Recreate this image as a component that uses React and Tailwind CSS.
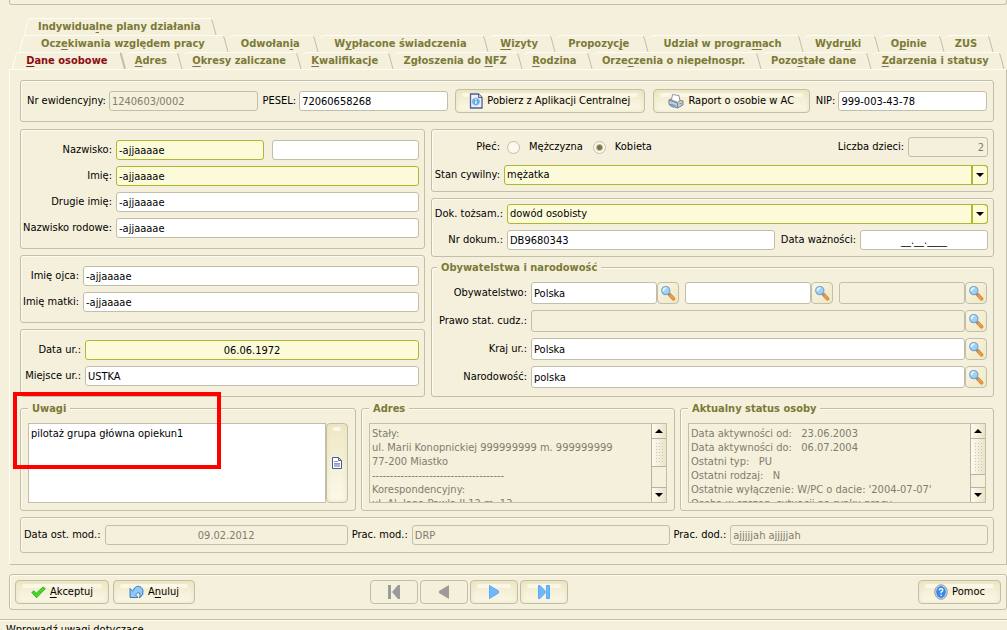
import { useState } from "react";

const tabRows = [
  ["Indywidua&lne plany działania"],
  [
    "Ocz&ekiwania względem pracy",
    "Odwołan&ia",
    "W&ypłacone świadczenia",
    "&Wizyty",
    "Propozyc&je",
    "Udział w progra&mach",
    "Wydr&uki",
    "O&pinie",
    "ZUS",
  ],
  [
    "&Dane osobowe",
    "&Adres",
    "&Okresy zaliczane",
    "&Kwalifikacje",
    "Zgłoszenia do &NFZ",
    "&Rodzina",
    "Orze&czenia o niepełnospr.",
    "Pozo&stałe dane",
    "&Zdarzenia i statusy",
  ],
];

const rowStyles = [
  "flex h-[17px] pl-[24px]",
  "flex h-[17px] pl-[19px] pr-[13px]",
  "flex h-[17px] pl-[12px] pr-[2px]",
];

const adresText = `Stały:
ul. Marii Konopnickiej 999999999 m. 999999999
77-200 Miastko
-------------------------------------
Korespondencyjny:
ul. Al. Jana Pawła II 12 m. 12`;

const statusText = `Data aktywności od:   23.06.2003
Data aktywności do:   06.07.2004
Ostatni typ:   PU
Ostatni rodzaj:   N
Ostatnie wyłączenie: W/PC o dacie: '2004-07-07'
Osoba w szczeg. sytuacji na rynku pracy:`;

// "&" stands before the access key letter
function Mnemonic({ text }) {
  const i = text.indexOf("&");
  if (i < 0) return text;
  return (
    <>
      {text.slice(0, i)}
      <u className="underline underline-offset-2">{text[i + 1]}</u>
      {text.slice(i + 2)}
    </>
  );
}

function Tab({ label, active, first, grow, onClick }) {
  return (
    <button
      type="button"
      role="tab"
      aria-selected={active}
      onClick={onClick}
      style={{ flexGrow: grow }}
      className="flex h-[17px] text-[11px] leading-4 font-bold whitespace-nowrap"
    >
      <svg width="6" height="17" viewBox="0 0 6 17" fill="none" stroke="#fffef6">
        {first ? <path d="M0.5 17L3.5 4Q4.5 0.5 6 0.5" /> : <path d="M1 3Q2 0.5 6 0.5" />}
      </svg>
      <span
        className={`grow border-t border-[#fffef6] ${first ? "pl-2" : "pl-[3px]"} ${
          active ? "pr-3 text-[#8b0d12]" : "pr-[10px] text-[#7b7a38]"
        }`}
      >
        <Mnemonic text={label} />
      </span>
      <svg width="6" height="17" viewBox="0 0 6 17" fill="none">
        <path d="M0 1.5Q1 1.5 1.5 4L5 17" stroke="#bfbda8" strokeWidth={active ? 2 : 1} />
      </svg>
    </button>
  );
}

function Group({ className = "", children }) {
  return (
    <div
      className={`rounded-[3px] border border-[#c1bea9] shadow-[inset_1px_1px_0_#fefcf0] ${className}`}
    >
      {children}
    </div>
  );
}

function TitledGroup({ title, className = "", children }) {
  return (
    <fieldset
      className={`min-w-0 rounded-[3px] border border-[#c1bea9] shadow-[inset_1px_1px_0_#fefcf0] ${className}`}
    >
      <legend className="h-[13px] bg-[#f5f0dc] px-1 text-[11px] leading-[13px] font-bold text-[#7b7a38]">
        {title}
      </legend>
      {children}
    </fieldset>
  );
}

const fieldLook = {
  normal: "border-[#c1bea9] bg-white text-black",
  required: "border-[#acb82f] bg-[#fcfbd9] text-black",
  disabled: "border-[#c1bea9] bg-[#f5f0dc] text-[#807c6c]",
};

function Field({ look = "normal", className = "h-5", ...props }) {
  return (
    <input
      type="text"
      readOnly={look === "disabled"}
      className={`min-w-0 flex-1 rounded-[3px] border px-[2px] text-[11px] outline-none ${fieldLook[look]} ${className}`}
      {...props}
    />
  );
}

function Label({ className = "", ...props }) {
  return <label className={`shrink-0 text-right whitespace-nowrap ${className}`} {...props} />;
}

function Row({ id, label, labelWidth, children }) {
  return (
    <div className="flex items-center gap-1">
      <Label htmlFor={id} className={labelWidth}>
        {label}
      </Label>
      {children}
    </div>
  );
}

function Button({ className = "", children, disabled, ...props }) {
  return (
    <button
      type="button"
      disabled={disabled}
      className={`relative isolate flex h-6 shrink-0 items-center justify-center gap-1 rounded-[4px] border border-[#c1bea9] whitespace-nowrap ${
        disabled
          ? ""
          : "bg-linear-to-b from-[#efe8c4] via-[#f5f0d8] to-[#fbf9e9] shadow-[inset_0_0_5px_#e8e1bb]"
      } ${className}`}
      {...props}
    >
      {!disabled && (
        <span className="absolute inset-x-[6px] top-[3px] -z-10 h-[4px] rounded-[2px] bg-[#faf7e8]" />
      )}
      {children}
    </button>
  );
}

function Combo({ id, options }) {
  return (
    <div className="relative min-w-0 flex-1">
      <select
        id={id}
        className="block h-5 w-full appearance-none rounded-[3px] border border-[#acb82f] bg-[#fcfbd9] pr-5 pl-[2px] text-[11px] outline-none"
      >
        {options.map((o) => (
          <option key={o}>{o}</option>
        ))}
      </select>
      <span className="pointer-events-none absolute top-0 right-0 flex h-5 w-[17px] items-center justify-center rounded-r-[4px] border border-l-2 border-[#acb82f] bg-[#fcfbd9]">
        <svg width="8" height="4" viewBox="0 0 8 4">
          <path d="M0 0H8L4 4Z" fill="#000" />
        </svg>
      </span>
    </div>
  );
}

function SearchButton({ label }) {
  return (
    <button
      type="button"
      aria-label={label}
      className="flex h-[22px] w-[22px] shrink-0 items-center justify-center rounded-[4px] border border-[#c1bea9] bg-linear-to-br from-[#f9f6e4] to-[#efe8c4]"
    >
      <svg width="16" height="16" viewBox="0 0 16 16">
        <path d="M9.5 9.5L13.5 13.8" stroke="#b98a63" strokeWidth="3.6" strokeLinecap="round" />
        <path d="M10.2 10.2L13.3 13.6" stroke="#ff9a2e" strokeWidth="2.2" strokeLinecap="round" />
        <path d="M8.8 8.8L10.2 10.2" stroke="#8f8f9c" strokeWidth="1.6" />
        <circle cx="5.8" cy="5.6" r="4.1" fill="#9bd4f5" stroke="#7fa3cf" strokeWidth="1.2" />
        <path d="M3.4 6.2A2.8 2.8 0 0 1 6.4 3" stroke="#e8f8ff" strokeWidth="1.7" fill="none" />
      </svg>
    </button>
  );
}

function ScrollBar({ thumb }) {
  return (
    <div
      aria-hidden="true"
      className="flex w-[15px] shrink-0 flex-col border-l border-[#b5b29d] bg-[#f5f0dc]"
    >
      <span className="flex h-[15px] items-center justify-center border-b border-[#b5b29d] bg-linear-to-r from-[#fdfbf0] to-[#e9e3c8]">
        <svg width="8" height="4" viewBox="0 0 8 4">
          <path d="M0 4H8L4 0Z" fill="#000" />
        </svg>
      </span>
      <span
        className={`flex justify-center border-b border-[#b5b29d] bg-linear-to-r from-[#fdfbf0] to-[#e9e3c8] py-[3px] ${thumb}`}
      >
        <span className="w-[9px] bg-[radial-gradient(#c9c5ae_1px,transparent_1px)] bg-size-[3px_3px]" />
      </span>
      <span className="grow" />
      <span className="flex h-[15px] items-center justify-center border-t border-[#b5b29d] bg-linear-to-r from-[#fdfbf0] to-[#e9e3c8]">
        <svg width="8" height="4" viewBox="0 0 8 4">
          <path d="M0 0H8L4 4Z" fill="#000" />
        </svg>
      </span>
    </div>
  );
}

function ReadOnlyMemo({ title, text, thumb }) {
  return (
    <TitledGroup title={title} className="px-[7px] pb-[7px]">
      <div className="mt-2 flex h-20 border border-[#c1bea9]">
        <textarea
          readOnly
          aria-label={title}
          value={text}
          className="min-w-0 flex-1 resize-none overflow-hidden px-[2px] pt-[3px] text-[11px] leading-[14px] whitespace-pre text-[#807c6c] outline-none"
        />
        <ScrollBar thumb={thumb} />
      </div>
    </TitledGroup>
  );
}

function InfoIcon() {
  return (
    <svg width="14" height="16" viewBox="0 0 14 16">
      <path d="M1.5 1H9.5L13 4.5V15H1.5Z" fill="#eef3fb" stroke="#4c5f92" strokeWidth="1.3" />
      <path d="M9.5 1V4.5H13" fill="#c6d0e8" stroke="#4c5f92" />
      <circle cx="6.9" cy="8.6" r="3.6" fill="#5aaef0" stroke="#9fb8d8" />
      <path d="M6.9 8V10.8" stroke="#fff" strokeWidth="1.4" />
      <circle cx="6.9" cy="6.6" r="0.8" fill="#fff" />
    </svg>
  );
}

function PrinterIcon() {
  return (
    <svg width="16" height="16" viewBox="0 0 16 16">
      <path d="M1 7L4 5.5L15 8V12L9.5 15L1 11.5Z" fill="#c9ccd3" stroke="#7c7f88" />
      <path d="M4.5 1.5L11 2.5L12 8L9.5 9.2L3.5 7Z" fill="#fff" stroke="#8b95a8" />
      <path d="M1 7L9.5 10V15" fill="none" stroke="#7c7f88" />
      <path d="M3 11L7.5 12.7L6 14.6L2 12.7Z" fill="#6db2ea" stroke="#4f7fb0" strokeWidth="0.6" />
      <rect x="11.5" y="10" width="2" height="1.2" fill="#54b948" />
    </svg>
  );
}

function NoteIcon() {
  return (
    <svg width="10" height="12" viewBox="0 0 10 12">
      <path d="M0.5 0.5H6.5L9.5 3.5V11.5H0.5Z" fill="#fff" stroke="#4a5c94" />
      <path d="M6.5 0.5V3.5H9.5" fill="none" stroke="#4a5c94" />
      <path d="M2 4.5H6M2 6.5H8" stroke="#8c9ac8" />
      <path d="M2 7H8V10H2Z" fill="#a9b4dc" />
    </svg>
  );
}

function CheckIcon() {
  return (
    <svg width="15" height="13" viewBox="0 0 15 13">
      <path
        d="M0.8 6.5L3 4.8L5.3 7.2L12 1L14.3 2.6L5.6 11.8Z"
        fill="#3fdc22"
        stroke="#25a51a"
        strokeWidth="0.8"
        strokeLinejoin="round"
      />
    </svg>
  );
}

function UndoIcon() {
  return (
    <svg width="15" height="14" viewBox="0 0 15 14">
      <path
        d="M1 3.5V12.5H9L6.6 9.8Q9 6.5 10.4 8Q11.8 9.6 10.5 13Q15 10 14 5.5Q12.6 1 8.5 1.2Q5.5 1.8 3.6 6.2Z"
        fill="#8fc9f7"
        stroke="#2f6fc0"
        strokeWidth="0.9"
        strokeLinejoin="round"
      />
    </svg>
  );
}

function HelpIcon() {
  return (
    <svg width="14" height="16" viewBox="0 0 14 16">
      <ellipse cx="7" cy="8" rx="6.2" ry="7.2" fill="#dfe5ee" stroke="#8290a5" />
      <ellipse cx="7" cy="8" rx="4.9" ry="5.9" fill="#3b8be6" />
      <path
        d="M5.2 6.4Q5.3 4.6 7.1 4.6Q8.9 4.7 8.8 6.3Q8.7 7.4 7.1 8.1V9.3"
        fill="none"
        stroke="#fff"
        strokeWidth="1.3"
      />
      <circle cx="7.1" cy="11.2" r="0.8" fill="#fff" />
    </svg>
  );
}

function App() {
  const [tab, setTab] = useState("&Dane osobowe");
  const [sex, setSex] = useState("K");
  const [notes, setNotes] = useState("pilotaż grupa główna opiekun1");

  return (
    <div className="h-screen overflow-hidden bg-[#f5f0dc] font-['DejaVu_Sans_Condensed','DejaVu_Sans',sans-serif] text-[11px] leading-[14px] text-black">
      <div className="ml-[9px] h-[5px] rounded-b-[3px] border-x border-b border-[#c1bea9]" />

      <div role="tablist" className="pt-[13px]">
        {tabRows.map((row, r) => (
          <div key={r} className={rowStyles[r]}>
            {row.map((label, i) => (
              <Tab
                key={label}
                label={label}
                first={i === 0}
                active={label === tab}
                grow={r === 0 ? 0 : label.length}
                onClick={() => setTab(label)}
              />
            ))}
          </div>
        ))}
      </div>

      <main className="ml-[9px] flex flex-col border border-[#c1bea9] border-t-[#fffef6] border-l-[#fffef6] pt-[10px] pr-3 pb-[11px] pl-[10px]">
        <Group className="flex items-center px-[6px] py-2">
          <Label htmlFor="nr">Nr ewidencyjny:</Label>
          <Field id="nr" look="disabled" defaultValue="1240603/0002" className="ml-[3px] h-5" />
          <Label htmlFor="pesel" className="ml-[5px]">
            PESEL:
          </Label>
          <Field id="pesel" defaultValue="72060658268" className="ml-[3px] h-5" />
          <Button className="ml-[7px] w-[190px]">
            <InfoIcon />
            Pobierz z Aplikacji Centralnej
          </Button>
          <Button className="ml-2 w-[157px]">
            <PrinterIcon />
            Raport o osobie w AC
          </Button>
          <Label htmlFor="nip" className="ml-[6px]">
            NIP:
          </Label>
          <Field id="nip" defaultValue="999-003-43-78" className="ml-[3px] h-5" />
        </Group>

        <div className="mt-[7px] grid grid-cols-[minmax(0,405fr)_minmax(0,563fr)] gap-[6px]">
          <div className="flex flex-col gap-[6px]">
            <Group className="flex flex-col gap-[6px] py-[10px] pr-[5px]">
              <Row id="nazwisko" label="Nazwisko:" labelWidth="w-[91px]">
                <Field id="nazwisko" look="required" defaultValue="-ajjaaaae" />
                <Field aria-label="Nazwisko, drugi człon" className="ml-1 h-5" />
              </Row>
              <Row id="imie" label="Imię:" labelWidth="w-[91px]">
                <Field id="imie" look="required" defaultValue="-ajjaaaae" />
              </Row>
              <Row id="imie2" label="Drugie imię:" labelWidth="w-[91px]">
                <Field id="imie2" defaultValue="-ajjaaaae" />
              </Row>
              <Row id="rodowe" label="Nazwisko rodowe:" labelWidth="w-[91px]">
                <Field id="rodowe" defaultValue="-ajjaaaae" />
              </Row>
            </Group>
            <Group className="flex flex-col gap-[6px] py-[10px] pr-[5px]">
              <Row id="ojciec" label="Imię ojca:" labelWidth="w-[58px]">
                <Field id="ojciec" defaultValue="-ajjaaaae" />
              </Row>
              <Row id="matka" label="Imię matki:" labelWidth="w-[58px]">
                <Field id="matka" defaultValue="-ajjaaaae" />
              </Row>
            </Group>
            <Group className="flex flex-col gap-[6px] py-[10px] pr-[5px]">
              <Row id="dataUr" label="Data ur.:" labelWidth="w-[60px]">
                <Field
                  id="dataUr"
                  look="required"
                  defaultValue="06.06.1972"
                  className="h-5 text-center"
                />
              </Row>
              <Row id="miejsceUr" label="Miejsce ur.:" labelWidth="w-[60px]">
                <Field id="miejsceUr" defaultValue="USTKA" />
              </Row>
            </Group>
          </div>

          <div className="flex flex-col">
            <Group className="flex flex-col gap-2 pt-[7px] pr-[5px] pb-[6px]">
              <div className="flex items-center">
                <span className="w-[68px] text-right">Płeć:</span>
                <label className="ml-[7px] flex items-center gap-[9px]">
                  <input
                    type="radio"
                    name="sex"
                    checked={sex === "M"}
                    onChange={() => setSex("M")}
                    className="size-[13px] appearance-none rounded-full border border-[#c1bea9] bg-[#fbf9ee] checked:bg-[radial-gradient(#77763f_2px,#fbf9ee_4px)]"
                  />
                  Mężczyzna
                </label>
                <label className="ml-[10px] flex items-center gap-[9px]">
                  <input
                    type="radio"
                    name="sex"
                    checked={sex === "K"}
                    onChange={() => setSex("K")}
                    className="size-[13px] appearance-none rounded-full border border-[#c1bea9] bg-[#fbf9ee] checked:bg-[radial-gradient(#77763f_2px,#fbf9ee_4px)]"
                  />
                  Kobieta
                </label>
                <Label htmlFor="dzieci" className="ml-auto">
                  Liczba dzieci:
                </Label>
                <input
                  id="dzieci"
                  type="text"
                  readOnly
                  defaultValue="2"
                  className="ml-1 h-5 w-20 rounded-[3px] border border-[#c1bea9] px-[3px] text-right text-[#807c6c]"
                />
              </div>
              <Row id="stan" label="Stan cywilny:" labelWidth="w-[68px]">
                <Combo id="stan" options={["mężatka", "panna", "wdowa", "rozwiedziona"]} />
              </Row>
            </Group>

            <Group className="mt-[6px] flex flex-col gap-[6px] pt-[5px] pr-[5px] pb-[6px]">
              <Row id="dok" label="Dok. tożsam.:" labelWidth="w-[71px]">
                <Combo id="dok" options={["dowód osobisty", "paszport"]} />
              </Row>
              <Row id="nrDok" label="Nr dokum.:" labelWidth="w-[71px]">
                <Field id="nrDok" defaultValue="DB9680343" />
                <Label htmlFor="wazne" className="ml-[2px]">
                  Data ważności:
                </Label>
                <input
                  id="wazne"
                  type="text"
                  defaultValue="__.__.____"
                  className="h-5 w-32 rounded-[3px] border border-[#c1bea9] bg-white text-center"
                />
              </Row>
            </Group>

            <TitledGroup
              title="Obywatelstwa i narodowość"
              className="mt-1 flex flex-col pr-[6px] pb-2 pl-[5px]"
            >
              <div className="flex flex-col gap-[6px] pt-2">
                <Row id="obyw" label="Obywatelstwo:" labelWidth="w-[90px]">
                  <div className="flex min-w-0 flex-1 gap-[6px]">
                    <div className="flex min-w-0 flex-1">
                      <Field id="obyw" defaultValue="Polska" className="h-[22px]" />
                      <SearchButton label="Szukaj obywatelstwa" />
                    </div>
                    <div className="flex min-w-0 flex-1">
                      <Field aria-label="Drugie obywatelstwo" className="h-[22px]" />
                      <SearchButton label="Szukaj drugiego obywatelstwa" />
                    </div>
                    <div className="flex min-w-0 flex-1">
                      <Field look="disabled" aria-label="Trzecie obywatelstwo" className="h-[22px]" />
                      <SearchButton label="Szukaj trzeciego obywatelstwa" />
                    </div>
                  </div>
                </Row>
                <Row id="prawo" label="Prawo stat. cudz.:" labelWidth="w-[90px]">
                  <div className="flex min-w-0 flex-1">
                    <Field id="prawo" look="disabled" className="h-[22px]" />
                    <SearchButton label="Szukaj prawa" />
                  </div>
                </Row>
                <Row id="kraj" label="Kraj ur.:" labelWidth="w-[90px]">
                  <div className="flex min-w-0 flex-1">
                    <Field id="kraj" defaultValue="Polska" className="h-[22px]" />
                    <SearchButton label="Szukaj kraju" />
                  </div>
                </Row>
                <Row id="narod" label="Narodowość:" labelWidth="w-[90px]">
                  <div className="flex min-w-0 flex-1">
                    <Field id="narod" defaultValue="polska" className="h-[22px]" />
                    <SearchButton label="Szukaj narodowości" />
                  </div>
                </Row>
              </div>
            </TitledGroup>
          </div>
        </div>

        <div className="mt-[5px] grid grid-cols-[minmax(0,336fr)_minmax(0,314fr)_minmax(0,314fr)] gap-[5px]">
          <div className="relative">
            <TitledGroup title="Uwagi" className="px-[7px] pb-[7px]">
              <div className="mt-2 flex h-20">
                <textarea
                  aria-label="Uwagi"
                  value={notes}
                  onChange={(e) => setNotes(e.target.value)}
                  className="min-w-0 flex-1 resize-none border border-[#c1bea9] bg-white px-[2px] pt-[3px] text-[11px] leading-[14px] outline-none"
                />
                <Button aria-label="Edytuj uwagi" className="h-20 w-[22px]">
                  <NoteIcon />
                </Button>
              </div>
            </TitledGroup>
            {/* highlight frame over the notes box */}
            <div className="pointer-events-none absolute -top-[10px] -left-[7px] h-[77px] w-[208px] border-4 border-[#ff0000]" />
          </div>
          <ReadOnlyMemo title="Adres" text={adresText} thumb="h-[28px]" />
          <ReadOnlyMemo title="Aktualny status osoby" text={statusText} thumb="h-[36px]" />
        </div>

        <Group className="mt-[6px] flex items-center gap-1 py-[7px] pr-[5px] pl-[3px]">
          <Label htmlFor="dataMod">Data ost. mod.:</Label>
          <Field
            id="dataMod"
            look="disabled"
            defaultValue="09.02.2012"
            className="h-5 grow-[242] text-center"
          />
          <Label htmlFor="pracMod">Prac. mod.:</Label>
          <Field id="pracMod" look="disabled" defaultValue="DRP" className="h-5 grow-[257]" />
          <Label htmlFor="pracDod">Prac. dod.:</Label>
          <Field
            id="pracDod"
            look="disabled"
            defaultValue="ajjjjjah ajjjjjah"
            className="h-5 grow-[257]"
          />
        </Group>
      </main>

      <Group className="mt-[9px] ml-[9px] flex items-center p-[5px]">
        <Button className="w-[94px]">
          <CheckIcon />
          <span>
            <Mnemonic text="&Akceptuj" />
          </span>
        </Button>
        <Button className="ml-1 w-[82px]">
          <UndoIcon />
          <span>
            <Mnemonic text="A&nuluj" />
          </span>
        </Button>
        <span className="flex-1" />
        <div className="flex gap-[2px]">
          <Button disabled aria-label="Pierwszy" className="w-12">
            <svg width="14" height="14" viewBox="0 0 14 14" fill="#9b9b9b">
              <path d="M1 0H4V14H1ZM13 0V14L11 14L5 7L11 0Z" />
            </svg>
          </Button>
          <Button disabled aria-label="Poprzedni" className="w-12">
            <svg width="12" height="14" viewBox="0 0 12 14" fill="#9b9b9b">
              <path d="M11 0V14L1 8V6Z" />
            </svg>
          </Button>
          <Button aria-label="Następny" className="w-12">
            <svg width="12" height="14" viewBox="0 0 12 14" fill="#6db9ff" stroke="#5aa9fa">
              <path d="M1.5 0.5V13.5L10.5 8V6Z" />
            </svg>
          </Button>
          <Button aria-label="Ostatni" className="w-12">
            <svg width="14" height="14" viewBox="0 0 14 14" fill="#6db9ff" stroke="#5aa9fa">
              <path d="M1.5 0.5H3L8 6V8L3 13.5H1.5ZM9.5 0.5H12.5V13.5H9.5Z" />
            </svg>
          </Button>
        </div>
        <span className="flex-[2]" />
        <Button className="w-[83px]">
          <HelpIcon />
          Pomoc
        </Button>
      </Group>

      <footer className="mt-[9px] border-t border-[#c1bea9] pt-[3px] pl-[6px] shadow-[inset_0_1px_0_#fefcf0]">
        Wprowadź uwagi dotyczące
      </footer>
    </div>
  );
}

export default App;
